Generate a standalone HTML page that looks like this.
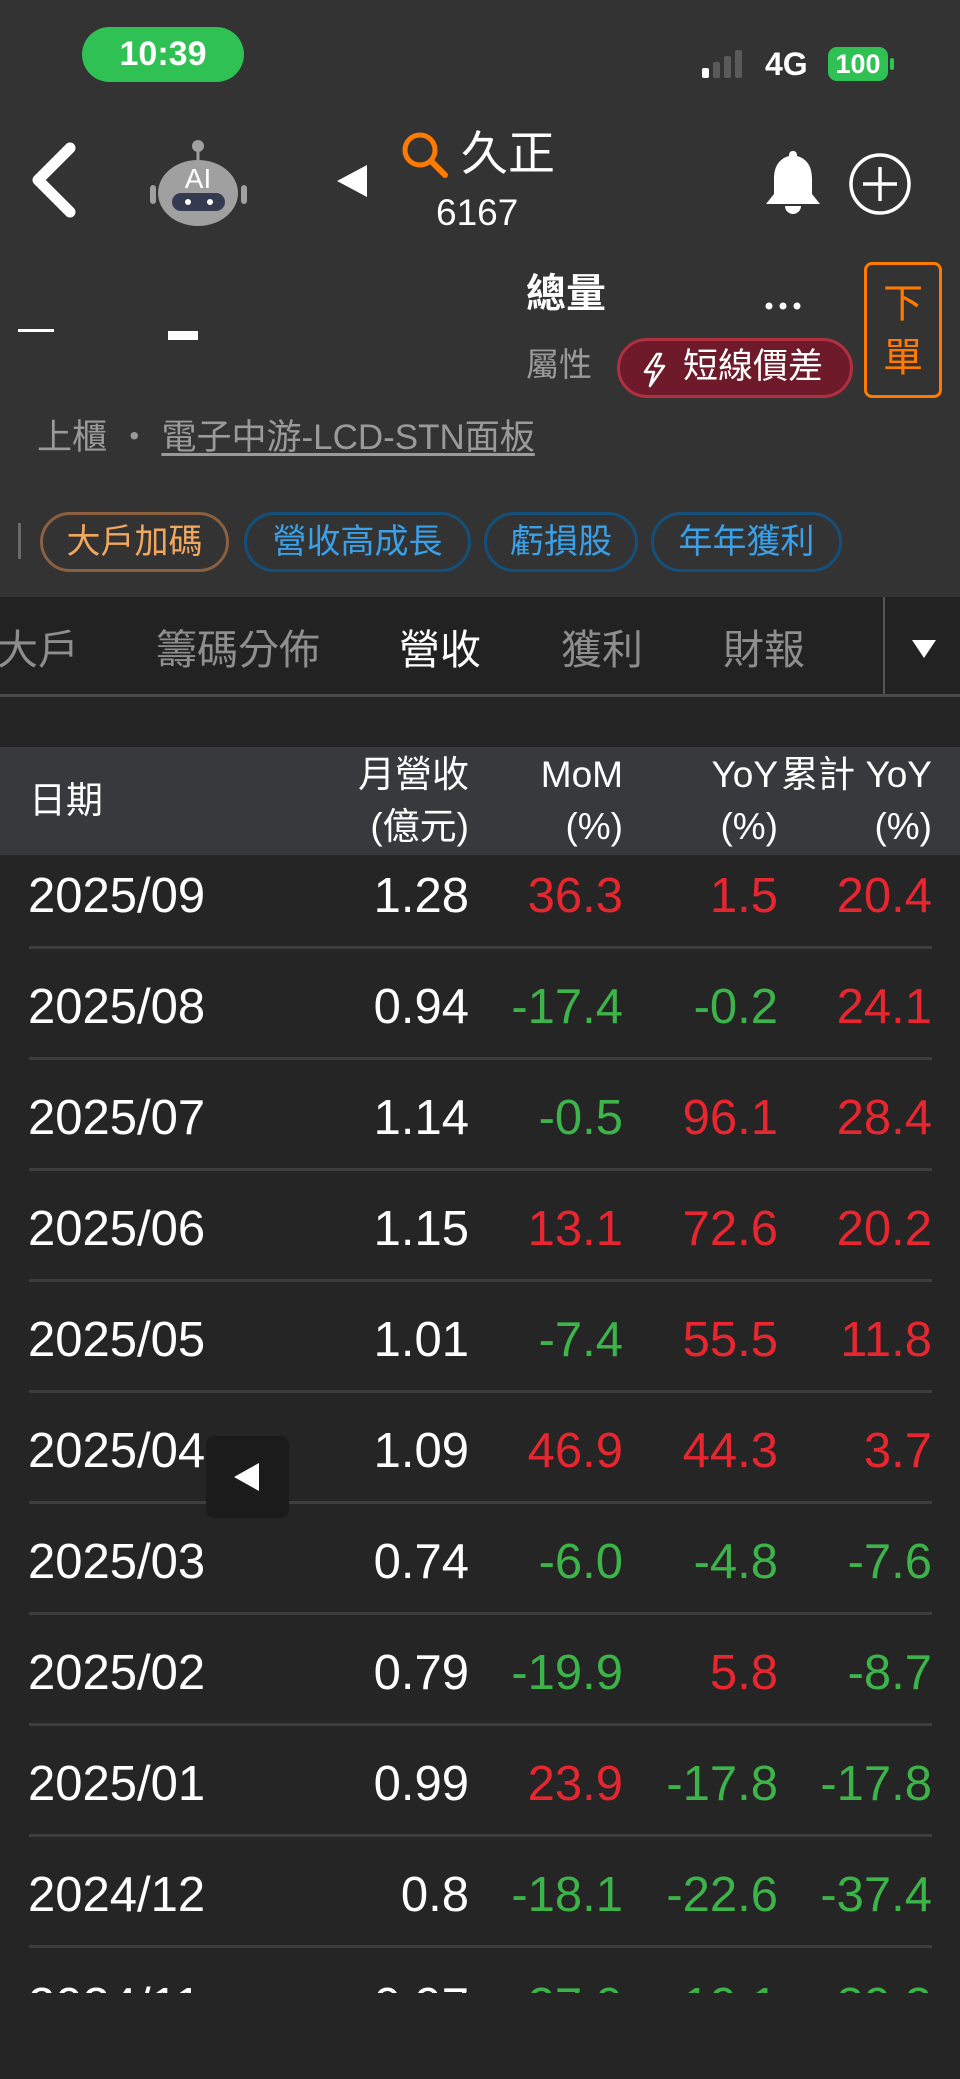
<!DOCTYPE html>
<html><head><meta charset="utf-8">
<style>
*{margin:0;padding:0;box-sizing:border-box}
body{width:960px;height:2079px;background:#252525;font-family:"Liberation Sans","Noto Sans CJK TC",sans-serif;color:#fff;position:relative;overflow:hidden}
.a{position:absolute;white-space:nowrap}
.top{position:absolute;left:0;top:0;width:960px;height:597px;background:#333333}
.tag{position:absolute;top:512px;height:60px;border-radius:30px;border:3px solid #14507a;color:#3aa0e8;font-size:34px;line-height:54px;text-align:center}
.tab{position:absolute;top:623px;font-size:41px;color:#8e8e8e;line-height:54px}
.row{position:absolute;left:0;width:960px;height:111px}
.row div{position:absolute;top:27px;font-size:49px;line-height:58px}
.d{left:28px}
.c1{right:491px;text-align:right}
.c2{right:337px;text-align:right}
.c3{right:182px;text-align:right}
.c4{right:28px;text-align:right}
.sep{position:absolute;left:29px;width:903px;height:3px;background:#3d3d3d}
.r{color:#e8262f}.g{color:#3cb44a}
.h{position:absolute;font-size:37px;line-height:44px;text-align:right}
</style></head><body>
<div class="top"></div>
<div class="a" style="left:82px;top:27px;width:162px;height:55px;border-radius:28px;background:#2fc153;font-size:34px;font-weight:bold;line-height:55px;text-align:center">10:39</div>
<svg class="a" style="left:700px;top:48px" width="56" height="32"><rect x="2" y="20" width="7" height="10" rx="2" fill="#fff"/><rect x="13" y="14" width="7" height="16" rx="2" fill="#5a5a5a"/><rect x="24" y="8" width="7" height="22" rx="2" fill="#5a5a5a"/><rect x="35" y="2" width="7" height="28" rx="2" fill="#5a5a5a"/></svg>
<div class="a" style="left:765px;top:46px;font-size:32px;font-weight:bold;line-height:36px">4G</div>
<div class="a" style="left:828px;top:47px;width:60px;height:34px;border-radius:9px;background:#2fc153;font-size:27px;font-weight:bold;line-height:34px;text-align:center">100</div>
<div class="a" style="left:890px;top:58px;width:4px;height:12px;border-radius:2px;background:#2fc153"></div>
<svg class="a" style="left:26px;top:140px" width="52" height="80"><path d="M44 8 L12 40 L44 72" stroke="#fff" stroke-width="11" fill="none" stroke-linecap="round" stroke-linejoin="round"/></svg>
<svg class="a" style="left:140px;top:135px" width="120" height="95"><line x1="58" y1="12" x2="58" y2="28" stroke="#a0a0a0" stroke-width="3"/><circle cx="58" cy="11" r="6" fill="#a0a0a0"/><rect x="10" y="50" width="6" height="19" rx="3" fill="#a0a0a0"/><rect x="101" y="50" width="6" height="19" rx="3" fill="#a0a0a0"/><ellipse cx="58" cy="58" rx="40" ry="33" fill="#a0a0a0"/><rect x="32" y="58" width="53" height="18" rx="9" fill="#343a4f"/><circle cx="48" cy="67" r="3" fill="#fff"/><circle cx="70" cy="67" r="3" fill="#fff"/><text x="58" y="53" font-family="Liberation Sans" font-size="28" fill="#fff" text-anchor="middle">AI</text></svg>
<svg class="a" style="left:335px;top:165px" width="34" height="34"><path d="M32 0 L32 32 L2 16 Z" fill="#fff"/></svg>
<svg class="a" style="left:400px;top:130px" width="52" height="52"><circle cx="20" cy="20" r="15" stroke="#ff7a00" stroke-width="5" fill="none"/><line x1="31" y1="31" x2="45" y2="45" stroke="#ff7a00" stroke-width="6" stroke-linecap="round"/></svg>
<div class="a" style="left:461px;top:126px;font-size:47px;line-height:56px">久正</div>
<div class="a" style="left:436px;top:192px;font-size:37px;line-height:42px">6167</div>
<svg class="a" style="left:760px;top:148px" width="66" height="72"><path d="M33 3 C30 3 29 5 29 8 C18 11 14 20 14 31 L14 46 L6 56 L60 56 L52 46 L52 31 C52 20 48 11 37 8 C37 5 36 3 33 3 Z" fill="#fff"/><path d="M25 58 A8 8 0 0 0 41 58 Z" fill="#fff"/></svg>
<svg class="a" style="left:847px;top:151px" width="66" height="66"><circle cx="33" cy="33" r="29" stroke="#fff" stroke-width="3.5" fill="none"/><line x1="33" y1="16" x2="33" y2="50" stroke="#fff" stroke-width="3.5"/><line x1="16" y1="33" x2="50" y2="33" stroke="#fff" stroke-width="3.5"/></svg>
<div class="a" style="left:18px;top:329px;width:36px;height:3px;background:#fff"></div>
<div class="a" style="left:168px;top:331px;width:30px;height:9px;background:#fff"></div>
<div class="a" style="left:526px;top:270px;font-size:40px;line-height:48px;font-weight:bold">總量</div>
<svg class="a" style="left:764px;top:300px" width="40" height="12"><circle cx="5" cy="6" r="3.5" fill="#fff"/><circle cx="19" cy="6" r="3.5" fill="#fff"/><circle cx="33" cy="6" r="3.5" fill="#fff"/></svg>
<div class="a" style="left:526px;top:344px;font-size:33px;line-height:42px;color:#9a9a9a">屬性</div>
<div class="a" style="left:617px;top:338px;width:236px;height:60px;border-radius:30px;background:#6e1a2b;border:3px solid #b0303f"></div>
<svg class="a" style="left:640px;top:352px" width="30" height="36"><path d="M17 2 L5 20 L14 20 L10 34 L24 14 L15 14 L21 2 Z" stroke="#fff" stroke-width="2.5" fill="none" stroke-linejoin="round"/></svg>
<div class="a" style="left:683px;top:345px;font-size:35px;line-height:44px">短線價差</div>
<div class="a" style="left:864px;top:262px;width:78px;height:136px;border:3px solid #ff7a00;border-radius:8px;color:#ff7a00;font-size:40px;line-height:54px;text-align:center;white-space:normal;padding-top:12px">下<br>單</div>
<div class="a" style="left:37px;top:416px;font-size:35px;line-height:44px;color:#9a9a9a">上櫃 ・ <span style="text-decoration:underline;text-underline-offset:4px">電子中游-LCD-STN面板</span></div>
<div class="a" style="left:18px;top:523px;width:3px;height:36px;background:#6a6a6a"></div>
<div class="tag" style="left:40px;width:189px;border-color:#8a6040;color:#f0a860">大戶加碼</div>
<div class="tag" style="left:244px;width:227px">營收高成長</div>
<div class="tag" style="left:484px;width:154px">虧損股</div>
<div class="tag" style="left:651px;width:191px">年年獲利</div>
<div class="a" style="left:0;top:597px;width:960px;height:100px;background:#222222"></div>
<div class="tab" style="left:-3px">大戶</div>
<div class="tab" style="left:156px">籌碼分佈</div>
<div class="tab" style="left:399px;color:#fff">營收</div>
<div class="tab" style="left:561px">獲利</div>
<div class="tab" style="left:723px">財報</div>
<div class="a" style="left:883px;top:597px;width:2px;height:100px;background:#555"></div>
<svg class="a" style="left:910px;top:638px" width="28" height="22"><path d="M2 2 L26 2 L14 20 Z" fill="#fff"/></svg>
<div class="a" style="left:0;top:694px;width:960px;height:3px;background:#4a4a4a"></div>
<div class="a" style="left:0;top:747px;width:960px;height:108px;background:#38393c"></div>
<div class="h" style="left:29px;top:779px">日期</div>
<div class="h" style="right:491px;top:753px">月營收</div>
<div class="h" style="right:491px;top:805px">(億元)</div>
<div class="h" style="right:337px;top:753px">MoM</div>
<div class="h" style="right:337px;top:805px">(%)</div>
<div class="h" style="right:182px;top:753px">YoY</div>
<div class="h" style="right:182px;top:805px">(%)</div>
<div class="h" style="right:28px;top:753px">累計 YoY</div>
<div class="h" style="right:28px;top:805px">(%)</div>
<div class="a" style="left:0;top:855px;width:960px;height:1138px;overflow:hidden">
<div class="row" style="top:-15px"><div class="d">2025/09</div><div class="c1">1.28</div><div class="c2 r">36.3</div><div class="c3 r">1.5</div><div class="c4 r">20.4</div></div>
<div class="sep" style="top:91px"></div>
<div class="row" style="top:96px"><div class="d">2025/08</div><div class="c1">0.94</div><div class="c2 g">-17.4</div><div class="c3 g">-0.2</div><div class="c4 r">24.1</div></div>
<div class="sep" style="top:202px"></div>
<div class="row" style="top:207px"><div class="d">2025/07</div><div class="c1">1.14</div><div class="c2 g">-0.5</div><div class="c3 r">96.1</div><div class="c4 r">28.4</div></div>
<div class="sep" style="top:313px"></div>
<div class="row" style="top:318px"><div class="d">2025/06</div><div class="c1">1.15</div><div class="c2 r">13.1</div><div class="c3 r">72.6</div><div class="c4 r">20.2</div></div>
<div class="sep" style="top:424px"></div>
<div class="row" style="top:429px"><div class="d">2025/05</div><div class="c1">1.01</div><div class="c2 g">-7.4</div><div class="c3 r">55.5</div><div class="c4 r">11.8</div></div>
<div class="sep" style="top:535px"></div>
<div class="row" style="top:540px"><div class="d">2025/04</div><div class="c1">1.09</div><div class="c2 r">46.9</div><div class="c3 r">44.3</div><div class="c4 r">3.7</div></div>
<div class="sep" style="top:646px"></div>
<div class="row" style="top:651px"><div class="d">2025/03</div><div class="c1">0.74</div><div class="c2 g">-6.0</div><div class="c3 g">-4.8</div><div class="c4 g">-7.6</div></div>
<div class="sep" style="top:757px"></div>
<div class="row" style="top:762px"><div class="d">2025/02</div><div class="c1">0.79</div><div class="c2 g">-19.9</div><div class="c3 r">5.8</div><div class="c4 g">-8.7</div></div>
<div class="sep" style="top:868px"></div>
<div class="row" style="top:873px"><div class="d">2025/01</div><div class="c1">0.99</div><div class="c2 r">23.9</div><div class="c3 g">-17.8</div><div class="c4 g">-17.8</div></div>
<div class="sep" style="top:979px"></div>
<div class="row" style="top:984px"><div class="d">2024/12</div><div class="c1">0.8</div><div class="c2 g">-18.1</div><div class="c3 g">-22.6</div><div class="c4 g">-37.4</div></div>
<div class="sep" style="top:1090px"></div>
<div class="row" style="top:1095px"><div class="d">2024/11</div><div class="c1">0.97</div><div class="c2 g">-27.9</div><div class="c3 g">-19.1</div><div class="c4 g">-39.3</div></div>
</div>
<div class="a" style="left:206px;top:1436px;width:83px;height:82px;border-radius:8px;background:#1b1b1b"></div>
<svg class="a" style="left:231px;top:1461px" width="32" height="32"><path d="M28 2 L28 30 L3 16 Z" fill="#fff"/></svg>
</body></html>
